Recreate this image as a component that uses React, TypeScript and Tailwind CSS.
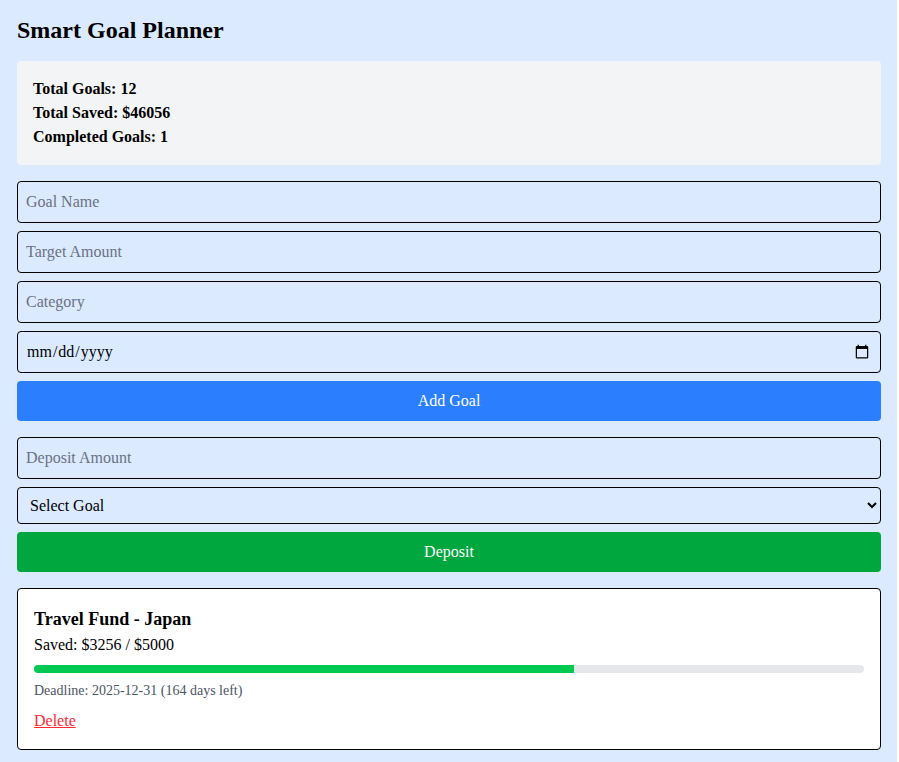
import { useState } from 'react';

const GOAL = {
  name: 'Travel Fund - Japan',
  saved: 3256,
  target: 5000,
  deadline: '2025-12-31',
  daysLeft: 164,
};

export default function App() {
  const [goalName, setGoalName] = useState('');
  const [target, setTarget] = useState('');
  const [category, setCategory] = useState('');
  const [deadline, setDeadline] = useState('');
  const [deposit, setDeposit] = useState('');
  const [selected, setSelected] = useState('');

  const pct = Math.min(100, (GOAL.saved / GOAL.target) * 100);
  const inputCls =
    'block w-full border border-black rounded px-2 py-2 text-base leading-6 bg-transparent text-black placeholder:text-gray-500';

  return (
    <div className="w-[897px] min-h-screen bg-blue-100 pt-4 pb-4 pl-[17px] pr-4 text-black font-['Liberation_Serif','Times_New_Roman',serif]">
      <h1 className="text-2xl leading-7 font-bold mb-[17px]">Smart Goal Planner</h1>

      {/* Summary */}
      <div className="bg-gray-100 rounded p-4 mb-4 font-bold text-base leading-6">
        <p>Total Goals: 12</p>
        <p>Total Saved: $46056</p>
        <p>Completed Goals: 1</p>
      </div>

      {/* Add goal form */}
      <div className="space-y-2 mb-4">
        <input className={inputCls} placeholder="Goal Name" value={goalName} onChange={(e) => setGoalName(e.target.value)} />
        <input className={inputCls} placeholder="Target Amount" value={target} onChange={(e) => setTarget(e.target.value)} />
        <input className={inputCls} placeholder="Category" value={category} onChange={(e) => setCategory(e.target.value)} />
        <input type="date" className={inputCls} value={deadline} onChange={(e) => setDeadline(e.target.value)} />
        <button className="block w-full bg-blue-500 text-white rounded py-2 text-base leading-6">Add Goal</button>
      </div>

      {/* Deposit form */}
      <div className="space-y-2 mb-4">
        <input className={inputCls} placeholder="Deposit Amount" value={deposit} onChange={(e) => setDeposit(e.target.value)} />
        <select
          className="block w-full border border-black rounded px-2 py-2 text-base bg-transparent text-black"
          value={selected}
          onChange={(e) => setSelected(e.target.value)}
        >
          <option value="">Select Goal</option>
          <option value="japan">{GOAL.name}</option>
        </select>
        <button className="block w-full bg-green-600 text-white rounded py-2 text-base leading-6">Deposit</button>
      </div>

      {/* Goal card */}
      <div className="bg-white border border-black rounded p-4">
        <h2 className="text-lg leading-7 font-bold">{GOAL.name}</h2>
        <p className="text-base leading-6">
          Saved: ${GOAL.saved} / ${GOAL.target}
        </p>
        <div className="mt-2 h-2 w-full bg-gray-200 rounded-full overflow-hidden">
          <div className="h-2 bg-green-500" style={{ width: `${pct}%` }} />
        </div>
        <p className="mt-2 text-sm leading-5 text-gray-600">
          Deadline: {GOAL.deadline} ({GOAL.daysLeft} days left)
        </p>
        <button className="mt-2 text-base leading-6 text-red-500 underline">Delete</button>
      </div>
    </div>
  );
}
